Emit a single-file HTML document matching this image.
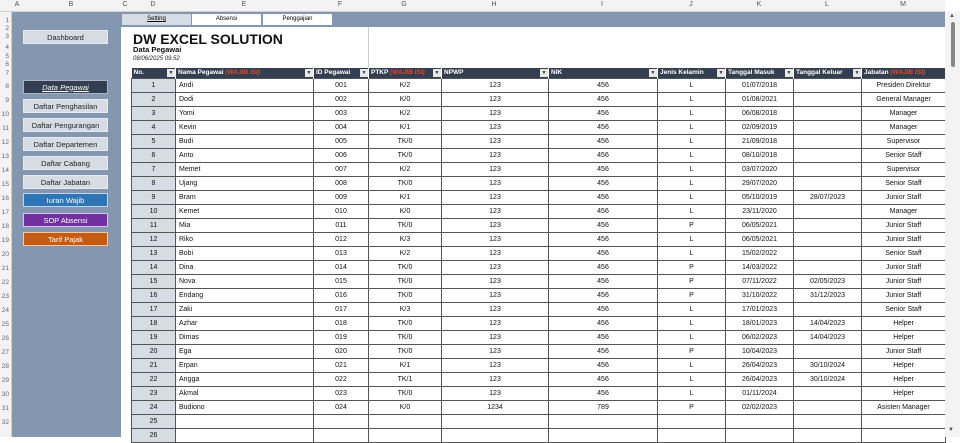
<!DOCTYPE html>
<html><head><meta charset="utf-8"><style>
*{box-sizing:border-box;margin:0;padding:0}
body{width:960px;height:437px;overflow:hidden;background:#fff;font-family:"Liberation Sans",sans-serif;position:relative}
.abs{position:absolute}
.colh{position:absolute;top:0;height:12px;background:#f3f3f3;border-bottom:1px solid #d0d0d0;width:945px;left:0}
.colh span{position:absolute;top:1px;font-size:7px;color:#555;transform:translateX(-50%)}
.rowh{position:absolute;left:0;top:12px;width:12px;height:425px;background:#f3f3f3;border-right:1px solid #d0d0d0}
.rowh span{position:absolute;right:2px;font-size:6.5px;color:#666}
.btn{position:absolute;left:23px;width:85px;height:14px;background:#d6dce4;border:1.5px solid #e8ecf2;font-size:7.5px;display:flex;align-items:center;justify-content:center;color:#222}
table{position:absolute;left:131px;top:68px;border-collapse:collapse;table-layout:fixed;font-size:7px}
td{border:1px solid #555;height:14px;padding:0 3px;white-space:nowrap;overflow:hidden;color:#111}
th{background:#333f50;color:#fff;height:10px;text-align:left;font-size:6.5px;padding:0 2px;border-right:1px solid #fff;white-space:nowrap;overflow:hidden;position:relative}
th i{color:#e04a2a;font-weight:bold}
th b.dd{position:absolute;right:0;top:1px;width:8px;height:8px;background:#e8e8e8;color:#333;font-size:5px;text-align:center;line-height:8px}
td.c{text-align:center}td.n{background:#d6dce4;text-align:center}
</style></head><body>
<div class="colh">
<span style="left:17px">A</span><span style="left:71px">B</span><span style="left:125px">C</span><span style="left:153px">D</span><span style="left:244px">E</span><span style="left:340px">F</span><span style="left:404px">G</span><span style="left:494px">H</span><span style="left:602px">I</span><span style="left:691px">J</span><span style="left:759px">K</span><span style="left:827px">L</span><span style="left:903px">M</span>
</div>
<div class="rowh">
<span style="top:5px">1</span><span style="top:13px">2</span><span style="top:21px">3</span><span style="top:32px">4</span><span style="top:41px">5</span><span style="top:49px">6</span><span style="top:58px">7</span><span style="top:71px">8</span><span style="top:85px">9</span><span style="top:99px">10</span><span style="top:113px">11</span><span style="top:127px">12</span><span style="top:141px">13</span><span style="top:155px">14</span><span style="top:169px">15</span><span style="top:183px">16</span><span style="top:197px">17</span><span style="top:211px">18</span><span style="top:225px">19</span><span style="top:239px">20</span><span style="top:253px">21</span><span style="top:267px">22</span><span style="top:281px">23</span><span style="top:295px">24</span><span style="top:309px">25</span><span style="top:323px">26</span><span style="top:337px">27</span><span style="top:351px">28</span><span style="top:365px">29</span><span style="top:379px">30</span><span style="top:393px">31</span><span style="top:407px">32</span>
</div>
<div class="abs" style="left:12px;top:12px;width:109px;height:425px;background:#8497b0"></div>
<div class="abs" style="left:121px;top:12px;width:824px;height:15px;background:#8497b0"></div>
<div class="abs" style="left:122px;top:14px;width:69px;height:11px;background:#d6dce4;font-size:6px;text-align:center;line-height:11px;text-decoration:underline">Setting</div>
<div class="abs" style="left:192px;top:14px;width:69px;height:11px;background:#fff;font-size:6px;text-align:center;line-height:11px">Absensi</div>
<div class="abs" style="left:263px;top:14px;width:69px;height:11px;background:#fff;font-size:6px;text-align:center;line-height:11px">Penggajian</div>
<div class="abs" style="left:368px;top:27px;width:1px;height:41px;background:#ccc"></div>
<div class="abs" style="left:133px;top:31px;font-size:14px;font-weight:bold;color:#111">DW EXCEL SOLUTION</div>
<div class="abs" style="left:133px;top:45px;font-size:7.5px;font-weight:bold;color:#111">Data Pegawai</div>
<div class="abs" style="left:133px;top:56px;font-size:6px;font-style:italic;color:#222">08/06/2025 09.52</div>
<div class="btn" style="top:30px">Dashboard</div>
<div class="btn" style="top:80px;background:#333f50;color:#fff;font-style:italic;text-decoration:underline;border-color:#aab6c8">Data Pegawai</div>
<div class="btn" style="top:99px">Daftar Penghasilan</div>
<div class="btn" style="top:118px">Daftar Pengurangan</div>
<div class="btn" style="top:137px">Daftar Departemen</div>
<div class="btn" style="top:156px">Daftar Cabang</div>
<div class="btn" style="top:175px">Daftar Jabatan</div>
<div class="btn" style="top:193px;background:#2e75b6;color:#fff;border-color:#bcd6f0">Iuran Wajib</div>
<div class="btn" style="top:213px;background:#7030a0;color:#fff;border-color:#d9c2ea">SOP Absensi</div>
<div class="btn" style="top:232px;background:#c55a11;color:#fff;border-color:#f2c8a8">Tarif Pajak</div>
<table>
<colgroup><col style="width:44px"><col style="width:138px"><col style="width:55px"><col style="width:73px"><col style="width:107px"><col style="width:109px"><col style="width:68px"><col style="width:68px"><col style="width:68px"><col style="width:84px"></colgroup>
<tr><th>No.<b class="dd">▼</b></th><th>Nama Pegawai <i>(WAJIB ISI)</i><b class="dd">▼</b></th><th>ID Pegawai<b class="dd">▼</b></th><th>PTKP <i>(WAJIB ISI)</i><b class="dd">▼</b></th><th>NPWP<b class="dd">▼</b></th><th>NIK<b class="dd">▼</b></th><th>Jenis Kelamin<b class="dd">▼</b></th><th>Tanggal Masuk<b class="dd">▼</b></th><th>Tanggal Keluar<b class="dd">▼</b></th><th>Jabatan <i>(WAJIB ISI)</i></th></tr>
<tr><td class="n">1</td><td>Andi</td><td class="c">001</td><td class="c">K/2</td><td class="c">123</td><td class="c">456</td><td class="c">L</td><td class="c">01/07/2018</td><td></td><td class="c">Presiden Direktur</td></tr>
<tr><td class="n">2</td><td>Dodi</td><td class="c">002</td><td class="c">K/0</td><td class="c">123</td><td class="c">456</td><td class="c">L</td><td class="c">01/08/2021</td><td></td><td class="c">General Manager</td></tr>
<tr><td class="n">3</td><td>Yomi</td><td class="c">003</td><td class="c">K/2</td><td class="c">123</td><td class="c">456</td><td class="c">L</td><td class="c">06/08/2018</td><td></td><td class="c">Manager</td></tr>
<tr><td class="n">4</td><td>Kevin</td><td class="c">004</td><td class="c">K/1</td><td class="c">123</td><td class="c">456</td><td class="c">L</td><td class="c">02/09/2019</td><td></td><td class="c">Manager</td></tr>
<tr><td class="n">5</td><td>Budi</td><td class="c">005</td><td class="c">TK/0</td><td class="c">123</td><td class="c">456</td><td class="c">L</td><td class="c">21/09/2018</td><td></td><td class="c">Supervisor</td></tr>
<tr><td class="n">6</td><td>Anto</td><td class="c">006</td><td class="c">TK/0</td><td class="c">123</td><td class="c">456</td><td class="c">L</td><td class="c">08/10/2018</td><td></td><td class="c">Senior Staff</td></tr>
<tr><td class="n">7</td><td>Memet</td><td class="c">007</td><td class="c">K/2</td><td class="c">123</td><td class="c">456</td><td class="c">L</td><td class="c">03/07/2020</td><td></td><td class="c">Supervisor</td></tr>
<tr><td class="n">8</td><td>Ujang</td><td class="c">008</td><td class="c">TK/0</td><td class="c">123</td><td class="c">456</td><td class="c">L</td><td class="c">29/07/2020</td><td></td><td class="c">Senior Staff</td></tr>
<tr><td class="n">9</td><td>Bram</td><td class="c">009</td><td class="c">K/1</td><td class="c">123</td><td class="c">456</td><td class="c">L</td><td class="c">05/10/2019</td><td class="c">28/07/2023</td><td class="c">Junior Staff</td></tr>
<tr><td class="n">10</td><td>Kemet</td><td class="c">010</td><td class="c">K/0</td><td class="c">123</td><td class="c">456</td><td class="c">L</td><td class="c">23/11/2020</td><td></td><td class="c">Manager</td></tr>
<tr><td class="n">11</td><td>Mia</td><td class="c">011</td><td class="c">TK/0</td><td class="c">123</td><td class="c">456</td><td class="c">P</td><td class="c">06/05/2021</td><td></td><td class="c">Junior Staff</td></tr>
<tr><td class="n">12</td><td>Riko</td><td class="c">012</td><td class="c">K/3</td><td class="c">123</td><td class="c">456</td><td class="c">L</td><td class="c">06/05/2021</td><td></td><td class="c">Junior Staff</td></tr>
<tr><td class="n">13</td><td>Bobi</td><td class="c">013</td><td class="c">K/2</td><td class="c">123</td><td class="c">456</td><td class="c">L</td><td class="c">15/02/2022</td><td></td><td class="c">Senior Staff</td></tr>
<tr><td class="n">14</td><td>Dina</td><td class="c">014</td><td class="c">TK/0</td><td class="c">123</td><td class="c">456</td><td class="c">P</td><td class="c">14/03/2022</td><td></td><td class="c">Junior Staff</td></tr>
<tr><td class="n">15</td><td>Nova</td><td class="c">015</td><td class="c">TK/0</td><td class="c">123</td><td class="c">456</td><td class="c">P</td><td class="c">07/11/2022</td><td class="c">02/05/2023</td><td class="c">Junior Staff</td></tr>
<tr><td class="n">16</td><td>Endang</td><td class="c">016</td><td class="c">TK/0</td><td class="c">123</td><td class="c">456</td><td class="c">P</td><td class="c">31/10/2022</td><td class="c">31/12/2023</td><td class="c">Junior Staff</td></tr>
<tr><td class="n">17</td><td>Zaki</td><td class="c">017</td><td class="c">K/3</td><td class="c">123</td><td class="c">456</td><td class="c">L</td><td class="c">17/01/2023</td><td></td><td class="c">Senior Staff</td></tr>
<tr><td class="n">18</td><td>Azhar</td><td class="c">018</td><td class="c">TK/0</td><td class="c">123</td><td class="c">456</td><td class="c">L</td><td class="c">18/01/2023</td><td class="c">14/04/2023</td><td class="c">Helper</td></tr>
<tr><td class="n">19</td><td>Dimas</td><td class="c">019</td><td class="c">TK/0</td><td class="c">123</td><td class="c">456</td><td class="c">L</td><td class="c">06/02/2023</td><td class="c">14/04/2023</td><td class="c">Helper</td></tr>
<tr><td class="n">20</td><td>Ega</td><td class="c">020</td><td class="c">TK/0</td><td class="c">123</td><td class="c">456</td><td class="c">P</td><td class="c">10/04/2023</td><td></td><td class="c">Junior Staff</td></tr>
<tr><td class="n">21</td><td>Erpan</td><td class="c">021</td><td class="c">K/1</td><td class="c">123</td><td class="c">456</td><td class="c">L</td><td class="c">26/04/2023</td><td class="c">30/10/2024</td><td class="c">Helper</td></tr>
<tr><td class="n">22</td><td>Angga</td><td class="c">022</td><td class="c">TK/1</td><td class="c">123</td><td class="c">456</td><td class="c">L</td><td class="c">26/04/2023</td><td class="c">30/10/2024</td><td class="c">Helper</td></tr>
<tr><td class="n">23</td><td>Akmal</td><td class="c">023</td><td class="c">TK/0</td><td class="c">123</td><td class="c">456</td><td class="c">L</td><td class="c">01/11/2024</td><td></td><td class="c">Helper</td></tr>
<tr><td class="n">24</td><td>Budiono</td><td class="c">024</td><td class="c">K/0</td><td class="c">1234</td><td class="c">789</td><td class="c">P</td><td class="c">02/02/2023</td><td></td><td class="c">Asisten Manager</td></tr>
<tr><td class="n">25</td><td></td><td></td><td></td><td></td><td></td><td></td><td></td><td></td><td></td></tr>
<tr><td class="n">26</td><td></td><td></td><td></td><td></td><td></td><td></td><td></td><td></td><td></td></tr>
</table>
<div class="abs" style="left:945px;top:12px;width:15px;height:425px;background:#f3f3f3"></div>
<div class="abs" style="left:949px;top:13px;font-size:6px;color:#555">▲</div>
<div class="abs" style="left:951px;top:22px;width:4px;height:45px;background:#888;border-radius:2px"></div>
<div class="abs" style="left:948px;top:427px;font-size:6px;color:#555">▼</div>
</body></html>
